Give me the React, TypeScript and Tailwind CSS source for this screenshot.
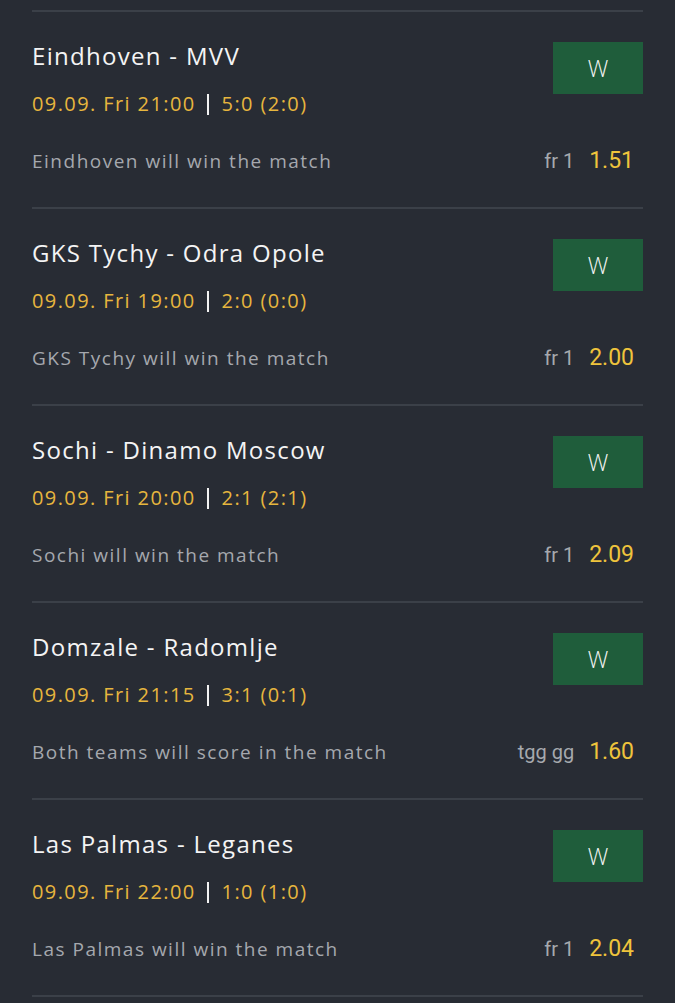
import React from 'react';

type Bet = {
  match: string;
  date: string;
  score: string;
  tip: string;
  market: string;
  odds: string;
};

const bets: Bet[] = [
  { match: 'Eindhoven - MVV', date: '09.09. Fri 21:00', score: '5:0 (2:0)', tip: 'Eindhoven will win the match', market: 'fr 1', odds: '1.51' },
  { match: 'GKS Tychy - Odra Opole', date: '09.09. Fri 19:00', score: '2:0 (0:0)', tip: 'GKS Tychy will win the match', market: 'fr 1', odds: '2.00' },
  { match: 'Sochi - Dinamo Moscow', date: '09.09. Fri 20:00', score: '2:1 (2:1)', tip: 'Sochi will win the match', market: 'fr 1', odds: '2.09' },
  { match: 'Domzale - Radomlje', date: '09.09. Fri 21:15', score: '3:1 (0:1)', tip: 'Both teams will score in the match', market: 'tgg gg', odds: '1.60' },
  { match: 'Las Palmas - Leganes', date: '09.09. Fri 22:00', score: '1:0 (1:0)', tip: 'Las Palmas will win the match', market: 'fr 1', odds: '2.04' },
];

const BetCard: React.FC<{ bet: Bet }> = ({ bet }) => (
  <div className="border-t-2 border-[#3b4048] pt-[30px] pb-[34px]">
    <div className="flex items-start justify-between">
      <div>
        <div className="h-[28px] text-[24px] leading-[28px] tracking-[1.3px] text-[#f4f4f4]">{bet.match}</div>
        <div className="mt-[22px] flex h-[24px] items-center text-[20px] leading-[24px] tracking-[1.4px] text-[#e7b63e]">
          <span>{bet.date}</span>
          <span className="ml-[11px] mr-[13px] h-[21px] w-[2px] bg-[#f2f2f2]" />
          <span>{bet.score}</span>
        </div>
      </div>
      <div className="flex h-[52px] w-[90px] items-center justify-center bg-[#1f5d3b] text-[23px] font-light text-[#f2f2f2]">
        W
      </div>
    </div>
    <div className="mt-[33px] flex h-[24px] items-center justify-between pr-[9px]">
      <span className="text-[19px] leading-[24px] tracking-[1.5px] text-[#a5a8ae]">{bet.tip}</span>
      <span className="flex h-[24px] items-center gap-[15px]" style={{ fontFamily: 'Roboto, sans-serif' }}>
        <span className="text-[20px] leading-[24px] text-[#a6a9ae]">{bet.market}</span>
        <span className="text-[23px] leading-[24px] text-[#efc43c]">{bet.odds}</span>
      </span>
    </div>
  </div>
);

const App: React.FC = () => (
  <div
    className="min-h-screen bg-[#282c34] px-[32px] pt-[10px]"
    style={{ fontFamily: '"Open Sans", "Noto Sans", sans-serif' }}
  >
    {bets.map((b) => (
      <BetCard key={b.match} bet={b} />
    ))}
    <div className="border-t-2 border-[#3b4048]" />
  </div>
);

export default App;
